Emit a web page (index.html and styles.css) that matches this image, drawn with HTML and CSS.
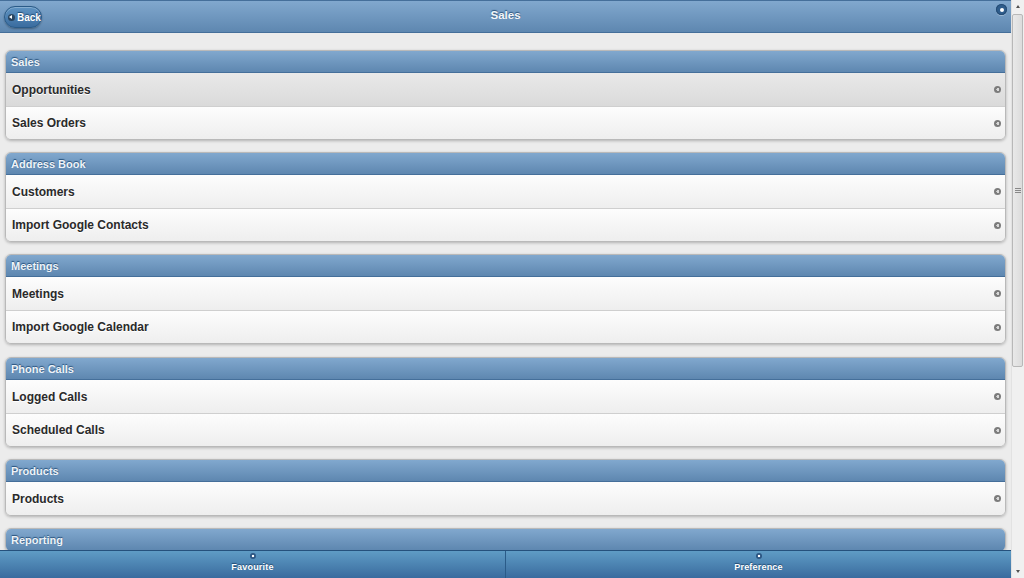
FILE: index.html
```html
<!DOCTYPE html>
<html lang="en">
<head>
  <meta charset="UTF-8">
  <meta name="viewport" content="width=device-width, initial-scale=1.0">
  <title>Sales</title>
  <link rel="stylesheet" href="styles.css">
</head>
<body>
  <div class="app">
    <div class="header">
      <div class="header-left">
        <a href="#" class="back-btn">
          <span class="back-icon"></span>Back
        </a>
      </div>
      <h1>Sales</h1>
      <div class="header-right">
        <span class="opt-icon"></span>
      </div>
    </div>

    <div class="content">
      <ul class="group">
        <li class="divider">Sales</li>
        <li class="item active"><a href="#">Opportunities</a></li>
        <li class="item"><a href="#">Sales Orders</a></li>
      </ul>
      <ul class="group">
        <li class="divider">Address Book</li>
        <li class="item"><a href="#">Customers</a></li>
        <li class="item"><a href="#">Import Google Contacts</a></li>
      </ul>
      <ul class="group">
        <li class="divider">Meetings</li>
        <li class="item"><a href="#">Meetings</a></li>
        <li class="item"><a href="#">Import Google Calendar</a></li>
      </ul>
      <ul class="group">
        <li class="divider">Phone Calls</li>
        <li class="item"><a href="#">Logged Calls</a></li>
        <li class="item"><a href="#">Scheduled Calls</a></li>
      </ul>
      <ul class="group">
        <li class="divider">Products</li>
        <li class="item"><a href="#">Products</a></li>
      </ul>
      <ul class="group">
        <li class="divider">Reporting</li>
      </ul>
    </div>

    <div class="footer">
      <a href="#" class="nav-btn"><span class="nav-icon"></span>Favourite</a>
      <a href="#" class="nav-btn"><span class="nav-icon"></span>Preference</a>
    </div>
  </div>

  <div class="scrollbar">
    <div class="sb-arrow sb-up"></div>
    <div class="sb-track">
      <div class="sb-thumb"><span class="sb-grip"></span></div>
    </div>
    <div class="sb-arrow sb-down"></div>
  </div>
</body>
</html>
```

FILE: styles.css
```css
:root {
  --bar-top: #81a8ce;
  --bar-bottom: #5e87b0;
  --bar-border: #456f9a;
  --btn-top: #5f9cc5;
  --btn-bottom: #396b9e;
  --page-bg: #ececec;
  --text-dark: #2a2a2a;
  --text-light: #fff;
}
* { box-sizing: border-box; margin: 0; padding: 0; }
html, body { height: 100%; overflow: hidden; }
body {
  font-family: "Liberation Sans", Arial, sans-serif;
  display: flex;
  background: var(--page-bg);
}
a { text-decoration: none; color: inherit; }

.app {
  flex: 1;
  display: flex;
  flex-direction: column;
  height: 100%;
  min-width: 0;
}

/* header */
.header {
  height: 33px;
  display: grid;
  grid-template-columns: 1fr auto 1fr;
  align-items: center;
  background: linear-gradient(var(--bar-top), var(--bar-bottom));
  border-top: 1px solid var(--bar-border);
  border-bottom: 1px solid var(--bar-border);
  color: var(--text-light);
  text-shadow: 0 -1px 1px #254f7a;
}
.header h1 {
  font-size: 11.5px;
  font-weight: bold;
  color: #f2f6fa;
  margin-top: -3px;
}
.header-left { padding-left: 4px; padding-top: 1px; }
.header-right {
  display: flex;
  justify-content: flex-end;
  align-self: start;
  padding: 3px 4px 0 0;
}
.back-btn {
  display: inline-flex;
  align-items: center;
  height: 22px;
  width: 38px;
  padding-left: 3px;
  border-radius: 11px;
  border: 1px solid #2a5b88;
  background: linear-gradient(#5f94c3, #3a6c9f);
  box-shadow: 0 1px 2px rgba(0,0,0,0.3), inset 0 1px 0 rgba(255,255,255,0.25);
  font-size: 10px;
  font-weight: bold;
  text-shadow: 0 -1px 1px #1f4870;
}
.back-icon {
  position: relative;
  width: 7px;
  height: 7px;
  margin-right: 2px;
  border-radius: 50%;
  background: rgba(0,0,0,0.45);
}
.back-icon::after {
  content: "";
  position: absolute;
  left: 1px;
  top: 1.5px;
  border-top: 2px solid transparent;
  border-bottom: 2px solid transparent;
  border-right: 3px solid #fff;
}
.opt-icon {
  position: relative;
  width: 11px;
  height: 11px;
  border-radius: 50%;
  background: #2f5d8c;
  box-shadow: inset 0 0 0 1px #254c75, 0 1px 0 rgba(255,255,255,0.3);
}
.opt-icon::after {
  content: "";
  position: absolute;
  left: 3.5px;
  top: 3.5px;
  width: 4px;
  height: 4px;
  border-radius: 50%;
  background: #fff;
}

/* list groups */
.content {
  flex: 1;
  overflow: hidden;
  padding: 17px 5px 0;
}
.group {
  list-style: none;
  margin-bottom: 12px;
  border: 1px solid #b9b9b9;
  border-radius: 6px;
  overflow: hidden;
  box-shadow: 0 1px 3px rgba(0,0,0,0.25);
}
.group:nth-child(3) { margin-bottom: 13px; }
.divider {
  height: 22px;
  line-height: 22px;
  padding-left: 5px;
  font-size: 11px;
  font-weight: bold;
  color: #eef3f8;
  background: linear-gradient(var(--bar-top), var(--bar-bottom));
  border-bottom: 1px solid var(--bar-border);
  text-shadow: 0 -1px 1px #254f7a;
}
.item a {
  display: flex;
  align-items: center;
  justify-content: space-between;
  height: 33px;
  padding: 0 4px 0 6px;
  font-size: 12px;
  font-weight: bold;
  color: var(--text-dark);
  text-shadow: 0 1px 0 #fff;
  background: linear-gradient(#fdfdfd, #eeeeee);
  border-top: 1px solid #cfcfcf;
}
.divider + .item a { border-top: none; }
.item.active a { background: linear-gradient(#e9e9e9, #dadada); }
.item a::after {
  content: "";
  width: 7px;
  height: 7px;
  border-radius: 50%;
  background: radial-gradient(circle at 55% 50%, #d8d8d8 0 1.3px, #7c7c7c 1.6px);
}

/* footer navbar */
.footer {
  height: 28px;
  display: flex;
  border-top: 1px solid #25517c;
}
.nav-btn {
  flex: 1;
  display: flex;
  flex-direction: column;
  align-items: center;
  padding-top: 2px;
  font-size: 9px;
  font-weight: bold;
  letter-spacing: 0.2px;
  color: var(--text-light);
  text-shadow: 0 -1px 1px #1f4870;
  background: linear-gradient(var(--btn-top), var(--btn-bottom));
}
.nav-btn + .nav-btn { border-left: 1px solid #2a5b88; }
.nav-icon {
  width: 6px;
  height: 6px;
  margin-bottom: 3px;
  border-radius: 50%;
  background: radial-gradient(circle, #fff 0 1.3px, #2b5582 1.6px);
}

/* scrollbar */
.scrollbar {
  width: 13px;
  height: 100%;
  display: flex;
  flex-direction: column;
  background: #f0f0f0;
  border-left: 1px solid #e2e2e2;
}
.sb-arrow {
  height: 13px;
  position: relative;
}
.sb-arrow::after {
  content: "";
  position: absolute;
  left: 4px;
  border-left: 2.5px solid transparent;
  border-right: 2.5px solid transparent;
}
.sb-up::after { top: 5px; border-bottom: 3px solid #505050; }
.sb-down::after { top: 5px; border-top: 3px solid #505050; }
.sb-track {
  flex: 1;
  padding: 1px 0 0 0;
}
.sb-thumb {
  height: 353px;
  margin: 0 1px 0 0;
  border: 1px solid #b8b8b8;
  border-radius: 2px;
  background: linear-gradient(90deg, #e9e9e9, #dcdcdc);
  display: flex;
  align-items: center;
  justify-content: center;
}
.sb-grip {
  width: 6px;
  height: 5px;
  background: repeating-linear-gradient(#888 0 1px, transparent 1px 2px);
}
```
